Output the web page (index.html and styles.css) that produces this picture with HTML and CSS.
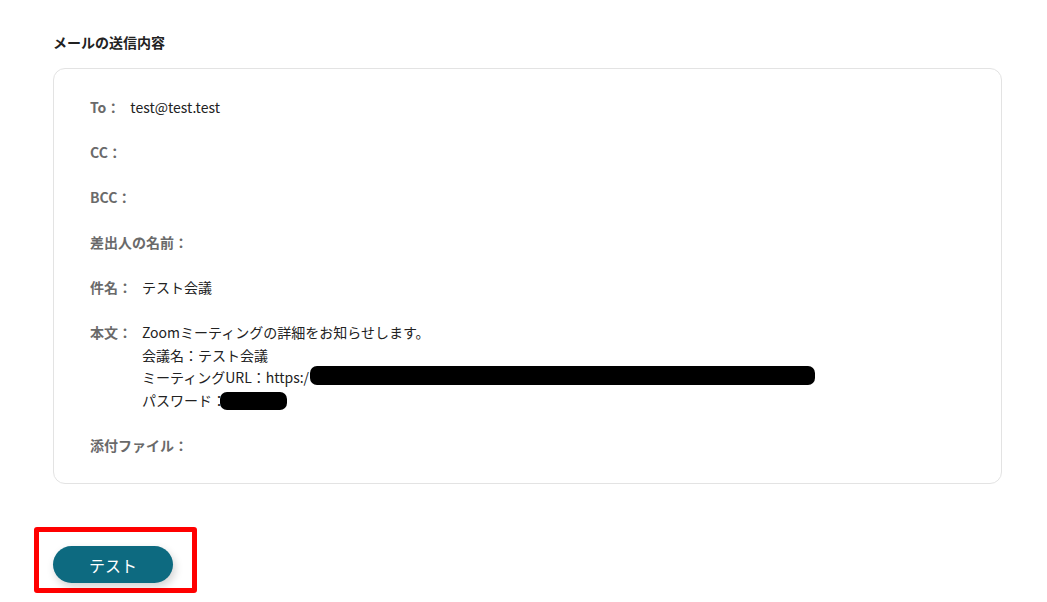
FILE: index.html
```html
<!DOCTYPE html>
<html lang="ja">
<head>
    <meta charset="UTF-8">
    <meta name="viewport" content="width=device-width, initial-scale=1.0">
    <title>メールの送信内容</title>
    <link rel="stylesheet" href="styles.css">
</head>
<body>
    <div class="page">
        <h2 class="section-title">メールの送信内容</h2>

        <div class="mail-card">
            <div class="field">
                <span class="label">To：</span>
                <span class="value">test@test.test</span>
            </div>
            <div class="field">
                <span class="label">CC：</span>
            </div>
            <div class="field">
                <span class="label">BCC：</span>
            </div>
            <div class="field">
                <span class="label">差出人の名前：</span>
            </div>
            <div class="field">
                <span class="label">件名：</span>
                <span class="value">テスト会議</span>
            </div>
            <div class="field">
                <span class="label">本文：</span>
                <div class="value">
                    <div>Zoomミーティングの詳細をお知らせします。</div>
                    <div>会議名：テスト会議</div>
                    <div>ミーティングURL：https:/<span class="redact redact-url"></span></div>
                    <div>パスワード：<span class="redact redact-pass"></span></div>
                </div>
            </div>
            <div class="field">
                <span class="label">添付ファイル：</span>
            </div>
        </div>

        <div class="highlight">
            <button class="test-btn">テスト</button>
        </div>
    </div>
</body>
</html>
```

FILE: styles.css
```css
body {
    margin: 0;
    background: #fff;
    font-family: "Noto Sans CJK JP", "Noto Sans", sans-serif;
    color: #222;
}
.page {
    padding: 32px 45px 0 53px;
}
.section-title {
    margin: 0 0 16px;
    font-size: 14px;
    line-height: 20px;
    font-weight: bold;
    color: #222;
}
.mail-card {
    border: 1px solid #e3e3e3;
    border-radius: 12px;
    padding: 27px 36px 27px;
    display: flex;
    flex-direction: column;
    gap: 22.4px;
}
.field {
    display: flex;
    gap: 10px;
    font-size: 14px;
    line-height: 22.6px;
}
.label {
    font-weight: bold;
    color: #6a6a6a;
    white-space: nowrap;
}
.value {
    color: #222;
}
.redact {
    display: inline-block;
    background: #000;
    border-radius: 7px;
    height: 19px;
    margin-top: -5px;
    margin-bottom: -5px;
}
.redact-url {
    width: 505px;
    margin-left: 1px;
    vertical-align: 3px;
}
.redact-pass {
    width: 67px;
    height: 18px;
    margin-left: -6px;
    vertical-align: 1px;
}
.highlight {
    display: inline-block;
    margin: 43px 0 0 -19px;
    border: 5px solid #ff0000;
    border-radius: 3px;
    padding: 14px 19px 5px 14px;
}
.test-btn {
    display: block;
    width: 120px;
    height: 37px;
    border: none;
    border-radius: 19px;
    background: #0d6a80;
    color: #fff;
    font-family: "Noto Sans CJK JP", sans-serif;
    font-size: 16px;
    box-shadow: 2px 4px 8px rgba(0,0,0,0.18);
    cursor: pointer;
}
```
